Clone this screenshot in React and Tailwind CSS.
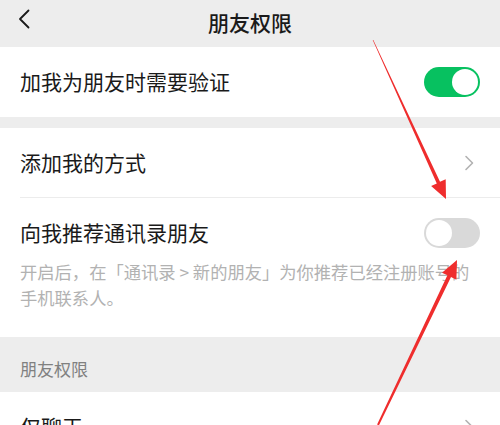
import React from 'react';

const font = { fontFamily: '"Noto Sans CJK SC", "Noto Sans", sans-serif' };

const Toggle = ({ on }) => (
  <div
    className={`w-[56px] h-[30px] rounded-full p-[2px] flex items-center ${
      on ? 'bg-[#07c160] justify-end' : 'bg-[#d9d9d9] justify-start'
    }`}
  >
    <div className="w-[26px] h-[26px] rounded-full bg-white" />
  </div>
);

const Chevron = () => (
  <svg width="10" height="16" viewBox="0 0 10 16" fill="none">
    <path d="M2 1.5 L8.5 8 L2 14.5" stroke="#b2b2b2" strokeWidth="1.6" strokeLinecap="round" strokeLinejoin="round" />
  </svg>
);

const App = () => {
  return (
    <div className="relative w-[500px] h-[425px] overflow-hidden bg-[#ededed]" style={font}>
      {/* Header */}
      <div className="relative h-[47px] flex items-center justify-center">
        <svg className="absolute left-[17px] top-[9px]" width="14" height="20" viewBox="0 0 14 20" fill="none">
          <path d="M11.5 1.5 L3 10 L11.5 18.5" stroke="#1a1a1a" strokeWidth="1.8" strokeLinecap="round" strokeLinejoin="round" />
        </svg>
        <span className="text-[21px] text-[#1a1a1a] font-medium -mt-[2px]">朋友权限</span>
      </div>

      {/* Verify */}
      <div className="bg-white h-[70px] flex items-center justify-between pl-[20px] pr-[20px]">
        <span className="text-[21px] text-[#1a1a1a]">加我为朋友时需要验证</span>
        <Toggle on />
      </div>

      <div className="h-[11px]" />

      {/* Add methods + recommend */}
      <div className="bg-white">
        <div className="h-[69px] flex items-center justify-between pl-[20px] pr-[26px]">
          <span className="text-[21px] text-[#1a1a1a]">添加我的方式</span>
          <Chevron />
        </div>
        <div className="ml-[20px] h-px bg-[#ececec]" />
        <div className="pl-[20px] pr-[20px] pt-[20px] pb-[26px]">
          <div className="h-[30px] flex items-center justify-between">
            <span className="text-[21px] text-[#1a1a1a]">向我推荐通讯录朋友</span>
            <Toggle />
          </div>
          <p className="mt-[11px] text-[17.3px] leading-[26px] text-[#b2b2b2]">
            开启后，在「通讯录 &gt; 新的朋友」为你推荐已经注册账号的手机联系人。
          </p>
        </div>
      </div>

      {/* Section title */}
      <div className="h-[55px] pl-[20px] pt-[20px] text-[17px] leading-[24px] text-[#808080]">朋友权限</div>

      {/* Chat only */}
      <div className="bg-white h-[70px] flex items-center justify-between pl-[20px] pr-[26px]">
        <span className="text-[21px] text-[#1a1a1a]">仅聊天</span>
        <Chevron />
      </div>

      {/* Annotation arrows */}
      <svg className="absolute inset-0 pointer-events-none" width="500" height="425" viewBox="0 0 500 425">
        <polygon
          fill="#ef2d2d"
          points="372.7,40.1 373.3,39.9 440.0,181.8 445.7,179.2 446,199 431.1,186 436.8,183.4"
        />
        <polygon
          fill="#ef2d2d"
          points="377.1,424.6 378.9,425.4 451,277.1 456.4,279.7 457,260 442,272.7 447.4,275.3"
        />
      </svg>
    </div>
  );
};

export default App;
